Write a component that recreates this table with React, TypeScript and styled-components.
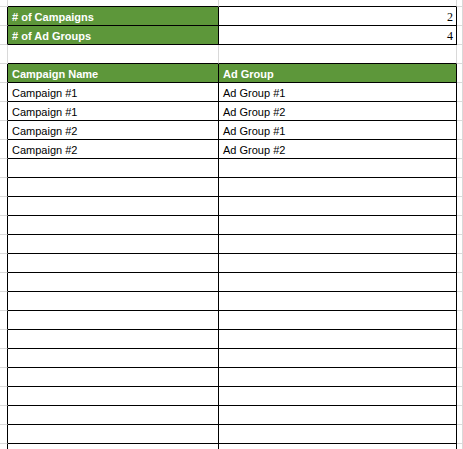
import React from "react";
import styled, { createGlobalStyle, css } from "styled-components";

const GlobalStyle = createGlobalStyle`
  html, body {
    margin: 0;
    padding: 0;
    background: #ffffff;
    overflow: hidden;
  }
  body {
    font-family: "Liberation Sans", Arial, Helvetica, sans-serif;
    font-size: 11px;
    color: #000;
  }
`;

const GRID = "#d9d9d9";
const INK = "#000000";
const GREEN = "#5d973a";

type Edge = "ink" | "grid";

const Sheet = styled.div`
  display: flex;
  flex-direction: column;
  width: 463px;
  height: 449px;
  overflow: hidden;
`;

const SheetRow = styled.div<{ $height: number }>`
  display: grid;
  grid-template-columns: 8px 211px 238px 1fr;
  height: ${(p) => p.$height}px;
  flex: none;
`;

const Cell = styled.div<{ $right?: Edge; $bottom?: Edge }>`
  box-sizing: border-box;
  display: flex;
  align-items: center;
  min-width: 0;
  overflow: hidden;
  white-space: nowrap;
  padding: 2px 0 0 4px;
  border-right: 1px solid ${(p) => (p.$right === "ink" ? INK : GRID)};
  border-bottom: 1px solid ${(p) => (p.$bottom === "ink" ? INK : GRID)};
`;

const GutterCell = styled(Cell)`
  padding: 0;
`;

const LabelCell = styled(Cell)<{ $fill?: boolean }>`
  ${(p) =>
    p.$fill &&
    css`
      background: ${GREEN};
      color: #ffffff;
      font-weight: 700;
    `}
`;

const ValueCell = styled(Cell)`
  justify-content: flex-end;
  padding: 2px 3px 0 0;
  font-family: "Liberation Serif", "Times New Roman", serif;
  font-size: 12px;
`;

const summary = [
  { label: "# of Campaigns", value: 2 },
  { label: "# of Ad Groups", value: 4 },
];

const rows = [
  ["Campaign #1", "Ad Group #1"],
  ["Campaign #1", "Ad Group #2"],
  ["Campaign #2", "Ad Group #1"],
  ["Campaign #2", "Ad Group #2"],
];

const EMPTY_ROWS = 18;

export default function App() {
  return (
    <>
      <GlobalStyle />
      <Sheet>
        <SheetRow $height={7}>
          <GutterCell />
          <Cell $bottom="ink" />
          <Cell $bottom="ink" />
          <GutterCell />
        </SheetRow>

        {summary.map((s) => (
          <SheetRow $height={19} key={s.label}>
            <GutterCell $right="ink" />
            <LabelCell $fill $right="ink" $bottom="ink">
              {s.label}
            </LabelCell>
            <ValueCell $right="ink" $bottom="ink">
              {s.value}
            </ValueCell>
            <GutterCell />
          </SheetRow>
        ))}

        <SheetRow $height={19}>
          <GutterCell />
          <Cell $bottom="ink" />
          <Cell $bottom="ink" />
          <GutterCell />
        </SheetRow>

        <SheetRow $height={19}>
          <GutterCell $right="ink" />
          <LabelCell $fill $right="ink" $bottom="ink">
            Campaign Name
          </LabelCell>
          <LabelCell $fill $right="ink" $bottom="ink">
            Ad Group
          </LabelCell>
          <GutterCell />
        </SheetRow>

        {rows.map((r, i) => (
          <SheetRow $height={19} key={i}>
            <GutterCell $right="ink" />
            <LabelCell $right="ink" $bottom="ink">
              {r[0]}
            </LabelCell>
            <LabelCell $right="ink" $bottom="ink">
              {r[1]}
            </LabelCell>
            <GutterCell />
          </SheetRow>
        ))}

        {Array.from({ length: EMPTY_ROWS }).map((_, i) => (
          <SheetRow $height={19} key={`e${i}`}>
            <GutterCell $right="ink" />
            <LabelCell $right="ink" $bottom="ink" />
            <LabelCell $right="ink" $bottom="ink" />
            <GutterCell />
          </SheetRow>
        ))}
      </Sheet>
    </>
  );
}
